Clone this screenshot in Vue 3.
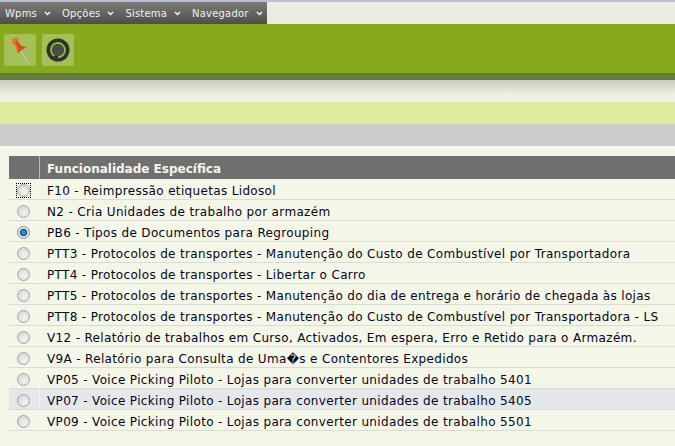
<script setup>
const menus = ['Wpms', 'Opções', 'Sistema', 'Navegador']
const rows = [
  'F10 - Reimpressão etiquetas Lidosol',
  'N2 - Cria Unidades de trabalho por armazém',
  'PB6 - Tipos de Documentos para Regrouping',
  'PTT3 - Protocolos de transportes - Manutenção do Custo de Combustível por Transportadora',
  'PTT4 - Protocolos de transportes - Libertar o Carro',
  'PTT5 - Protocolos de transportes - Manutenção do dia de entrega e horário de chegada às lojas',
  'PTT8 - Protocolos de transportes - Manutenção do Custo de Combustível por Transportadora - LS',
  'V12 - Relatório de trabalhos em Curso, Activados, Em espera, Erro e Retido para o Armazém.',
  'V9A - Relatório para Consulta de Uma\uFFFDs e Contentores Expedidos',
  'VP05 - Voice Picking Piloto - Lojas para converter unidades de trabalho 5401',
  'VP07 - Voice Picking Piloto - Lojas para converter unidades de trabalho 5405',
  'VP09 - Voice Picking Piloto - Lojas para converter unidades de trabalho 5501'
]
</script>

<template>
  <div class="page">
    <div class="topbar">
      <nav class="menu">
        <span v-for="m in menus" :key="m" class="menu-item">
          {{ m }}
          <svg class="chev" width="7" height="5" viewBox="0 0 7 5"><path d="M1 1l2.500 2.500L6 1" fill="none" stroke="#f2f2f2" stroke-width="1.500"/></svg>
        </span>
      </nav>
    </div>
    <div class="toolbar">
      <button class="tool">
        <svg width="32" height="32" viewBox="0 0 32 32">
          <path d="M18 17l6.500 11.500" stroke="#cfd3cc" stroke-width="1.500" fill="none"/>
          <path d="M18.800 17l6 11" stroke="#777b72" stroke-width=".6" fill="none"/>
          <path d="M8 6l5.500-2.500 .5 4.500 3.500 4 5 1-9 6-.5-4.500L10.500 10 8.500 9.500z" fill="#e0481a"/>
          <path d="M8 6l5.500-2.500 .3 2.500L11 8.500l3.500 6 -1.500 2-2.500-6.500-2-.5z" fill="#f0703a"/>
        </svg>
      </button>
      <button class="tool">
        <svg width="26" height="26" viewBox="0 0 26 26">
          <circle cx="13" cy="13" r="11.500" fill="#30302e"/>
          <circle cx="13" cy="13" r="6" fill="#4b4b48"/>
          <circle cx="13" cy="13" r="7" fill="none" stroke="#84c13c" stroke-width="1.800" stroke-dasharray="40 4" transform="rotate(120 13 13)"/>
        </svg>
      </button>
    </div>
    <div class="shadow-band"></div>
    <div class="band-green"></div>
    <div class="band-gray"></div>
    <div class="content">
      <table class="list">
        <thead>
          <tr><th class="sel"></th><th class="title">Funcionalidade Específica</th></tr>
        </thead>
        <tbody>
          <tr v-for="(r, i) in rows" :key="r" :class="{ hover: i === 10 }">
            <td class="sel">
              <span class="radio-wrap" :class="{ focus: i === 0 }">
                <input type="radio" name="func" :checked="i === 2" />
              </span>
            </td>
            <td class="txt">{{ r }}</td>
          </tr>
        </tbody>
      </table>
    </div>
  </div>
</template>

<style>
html, body { margin: 0; background: #f4f7e8; overflow: hidden; }
</style>

<style scoped>
.page { width: 675px; height: 446px; overflow: hidden; font-family: "DejaVu Sans", Verdana, sans-serif; background: #f4f7e8; }
.topbar { height: 22px; background: #e9eee0; border-top: 2px solid #b9c1d9; }
.menu { width: 267px; height: 22px; display: flex; background: linear-gradient(#7d7c79, #4e4d4b); color: #eef0f2; font-size: 10px; letter-spacing: .2px; align-items: center; }
.menu-item { display: flex; align-items: center; gap: 7px; padding-left: 5px; padding-right: 4px; white-space: nowrap; margin-right: 2px; }
.toolbar { height: 39px; background: #86aa1b; border-bottom: 7px solid #647c40; display: flex; gap: 6px; padding: 10px 4px 0; }
.tool { width: 32px; height: 32px; padding: 0; border: 0; border-radius: 2px; background: #a5c058; display: flex; align-items: center; justify-content: center; }
.shadow-band { height: 22px; background: linear-gradient(#c8cdbb, #f0f3e4 70%, #f2f5e6); }
.band-green { height: 22px; background: #dcec9f; }
.band-gray { height: 22px; background: #cdcccd; }
.content { padding: 10px 0 0 9px; }
.list { border-collapse: separate; border-spacing: 0; width: 666px; table-layout: fixed; font-size: 12px; color: #000; }
th { background: #70706e; height: 23px; padding: 0; color: #f6f6ee; text-align: left; font-size: 12px; font-weight: bold; }
th.sel { width: 30px; border-right: 1px solid #b9b9b5; }
th.title { padding: 3px 0 0 7px; box-sizing: border-box; }
td { height: 21px; box-sizing: border-box; padding: 0; border-bottom: 1px solid #d9dcd5; white-space: nowrap; overflow: hidden; }
td.sel { border-right: 1px solid #f4f7e8; vertical-align: top; }
td.txt { padding-left: 7px; padding-top: 4px; letter-spacing: .34px; vertical-align: top; line-height: 16px; color: #05051a; }
tr.hover td { background: #e4e8ea; }
.radio-wrap { display: block; width: 13px; height: 13px; margin: 5px 0 0 8px; }
.radio-wrap.focus { outline: 1px dotted #000; }
input { appearance: none; display: block; width: 13px; height: 13px; margin: 0; border-radius: 50%; border: 1.500px solid #a3a3a3; box-sizing: border-box; background: radial-gradient(circle at 60% 65%, #f4f4f4, #cfcfcf); }
input:checked { background: radial-gradient(circle at 50% 50%, #2a8ad0 0 1.800px, #0b4f8e 3.200px, #e4e4e4 4.200px, #f2f2f2); border-color: #858585; }
</style>
